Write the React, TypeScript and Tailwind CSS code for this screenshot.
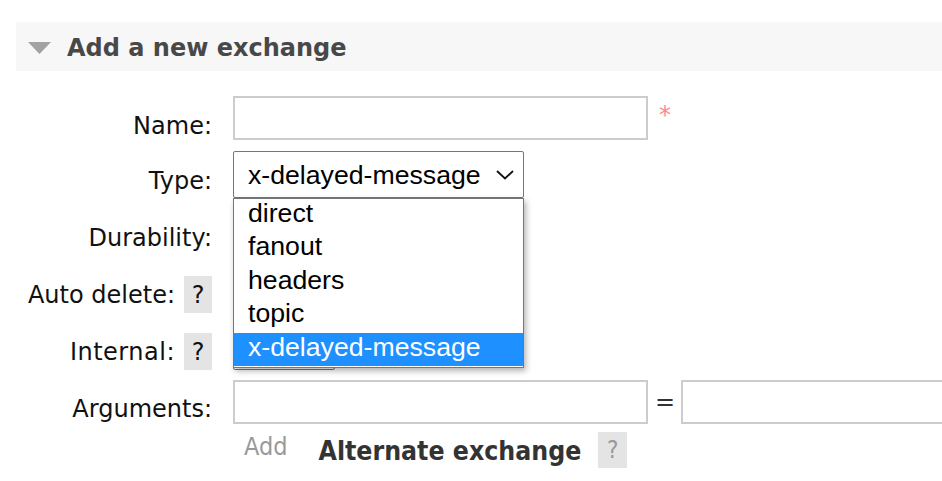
import React from 'react';

const OPTIONS = ['direct', 'fanout', 'headers', 'topic', 'x-delayed-message'] as const;

function Help({ muted }: { muted?: boolean }) {
  return (
    <span
      className={
        muted
          ? "flex h-[36px] w-[29px] items-center justify-center bg-[#e4e4e4] font-['DejaVu_Sans_Condensed','DejaVu_Sans',sans-serif] text-[24px] leading-[28px] text-[#999]"
          : 'flex h-[37px] w-[28px] items-center justify-center bg-[#e4e4e4] text-[24px] leading-[28px] text-[#111]'
      }
    >
      ?
    </span>
  );
}

function Chevron() {
  return (
    <svg width="18" height="10" viewBox="0 0 18 10" fill="none" className="shrink-0">
      <polyline points="1,1 9,8.5 17,1" stroke="#111" strokeWidth="1.8" />
    </svg>
  );
}

function FakeSelect({ width, children }: { width: string; children?: React.ReactNode }) {
  return (
    <div
      className={`flex h-[47px] items-center justify-between rounded-[2px] border border-[#767676] bg-white pl-[14px] pr-[9px] font-['Liberation_Sans',Arial,sans-serif] text-[26.67px] leading-[28px] text-black ${width}`}
    >
      {children}
    </div>
  );
}

export default function App() {
  return (
    <div className="relative h-[481px] w-[942px] overflow-hidden bg-white font-['DejaVu_Sans',Verdana,sans-serif] text-[24px] leading-[28px] text-[#111]">
      {/* Section header */}
      <div className="ml-[16px] mt-[22px] flex h-[49px] items-center bg-[#f7f7f7] pl-[12px] pt-[2px]">
        <svg width="23" height="12" viewBox="0 0 23 12" className="mr-[16px] shrink-0">
          <polygon points="0,0 23,0 11.5,12" fill="#a2a2a2" />
        </svg>
        <h2 className="text-[24px] font-bold text-[#484848]">Add a new exchange</h2>
      </div>

      {/* Form */}
      <div className="mt-[25px] flex flex-col">
        {/* Name */}
        <div className="flex h-[55px] items-start">
          <div className="w-[212px] shrink-0 pt-[16px] text-right">Name:</div>
          <div className="ml-[21px] flex items-start">
            <input className="h-[44px] w-[415px] border-2 border-[#ccc] bg-white outline-none" />
            <span className="ml-[11px] mt-[5px] text-[24px] text-[#ff8a8a]">*</span>
          </div>
        </div>

        {/* Type */}
        <div className="flex h-[57px] items-start">
          <div className="w-[212px] shrink-0 pt-[16px] text-right">Type:</div>
          <div className="ml-[21px]">
            <FakeSelect width="w-[291px]">
              <span>x-delayed-message</span>
              <Chevron />
            </FakeSelect>
          </div>
        </div>

        {/* Durability */}
        <div className="flex h-[57px] items-start">
          <div className="w-[212px] shrink-0 pt-[16px] text-right">Durability:</div>
          <div className="ml-[21px]">
            <FakeSelect width="w-[130px]" />
          </div>
        </div>

        {/* Auto delete */}
        <div className="flex h-[57px] items-start">
          <div className="flex w-[212px] shrink-0 items-start justify-end">
            <span className="pt-[16px]">Auto delete:</span>
            <span className="ml-[9px] mt-[11px]">
              <Help />
            </span>
          </div>
          <div className="ml-[21px]">
            <FakeSelect width="w-[102px]" />
          </div>
        </div>

        {/* Internal */}
        <div className="flex h-[56px] items-start">
          <div className="flex w-[212px] shrink-0 items-start justify-end">
            <span className="pt-[16px] tracking-[0.5px]">Internal:</span>
            <span className="ml-[9px] mt-[11px]">
              <Help />
            </span>
          </div>
          <div className="ml-[21px] mt-[1px]">
            <FakeSelect width="w-[102px]" />
          </div>
        </div>

        {/* Arguments */}
        <div className="flex items-start">
          <div className="w-[212px] shrink-0 pt-[17px] text-right">Arguments:</div>
          <div className="ml-[21px] flex shrink-0 flex-col">
            <div className="mt-[2px] flex items-center">
              <input className="h-[44px] w-[415px] shrink-0 border-2 border-[#ccc] bg-white outline-none" />
              <span className="ml-[7px] w-[20px] shrink-0 text-[#333]">=</span>
              <input className="ml-[6px] h-[44px] w-[300px] shrink-0 border-2 border-[#ccc] bg-white outline-none" />
            </div>
            <div className="mt-[8px] flex items-start font-['DejaVu_Sans_Condensed','DejaVu_Sans',sans-serif]">
              <span className="ml-[11px] mt-[1px] text-[25px] leading-[28px] text-[#999]">Add</span>
              <span className="ml-[31px] mt-[5px] text-[26.4px] font-bold leading-[28px] text-[#333]">
                Alternate exchange
              </span>
              <span className="ml-[17px]">
                <Help muted />
              </span>
            </div>
          </div>
        </div>
      </div>

      {/* Open dropdown list of the Type select */}
      <ul className="absolute left-[233px] top-[198px] w-[291px] border border-[#767676] bg-white pb-[1px] font-['Liberation_Sans',Arial,sans-serif] text-[26.67px] leading-[28px] text-black shadow-[2px_3px_6px_rgba(0,0,0,0.3)]">
        {OPTIONS.map((opt) => (
          <li
            key={opt}
            className={
              opt === 'x-delayed-message'
                ? 'h-[33.4px] bg-[#1e90ff] pl-[14px] text-white'
                : 'h-[33.4px] pl-[14px]'
            }
          >
            {opt}
          </li>
        ))}
      </ul>
    </div>
  );
}
